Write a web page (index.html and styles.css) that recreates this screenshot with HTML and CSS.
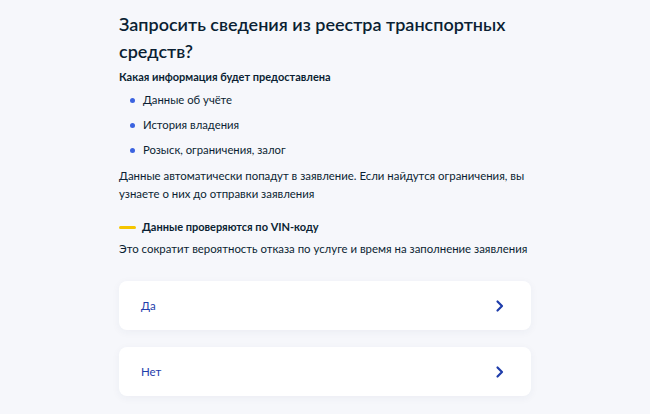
FILE: index.html
```html
<!DOCTYPE html>
<html lang="ru">
<head>
<meta charset="utf-8">
<link rel="stylesheet" href="styles.css">
</head>
<body>
<main class="page">
  <h1 class="title">Запросить сведения из реестра транспортных средств?</h1>
  <h2 class="subtitle">Какая информация будет предоставлена</h2>
  <ul class="list">
    <li>Данные об учёте</li>
    <li>История владения</li>
    <li>Розыск, ограничения, залог</li>
  </ul>
  <p class="text">Данные автоматически попадут в заявление. Если найдутся ограничения, вы узнаете о них до отправки заявления</p>
  <div class="note"><span class="note-line"></span><span class="note-title">Данные проверяются по VIN-коду</span></div>
  <p class="text note-text">Это сократит вероятность отказа по услуге и время на заполнение заявления</p>
  <div class="options">
    <a class="option" href="#"><span>Да</span>
      <svg class="chev" width="10" height="14" viewBox="0 0 10 14"><path d="M2.5 2.5 7 7l-4.5 4.5" fill="none" stroke="#1f3dab" stroke-width="2.2" stroke-linecap="round" stroke-linejoin="round"/></svg>
    </a>
    <a class="option" href="#"><span>Нет</span>
      <svg class="chev" width="10" height="14" viewBox="0 0 10 14"><path d="M2.5 2.5 7 7l-4.5 4.5" fill="none" stroke="#1f3dab" stroke-width="2.2" stroke-linecap="round" stroke-linejoin="round"/></svg>
    </a>
  </div>
</main>
</body>
</html>
```
FILE: styles.css
```css
* { box-sizing: border-box; }
html, body { margin: 0; padding: 0; }
body {
  background: #f6f7fb;
  font-family: Lato, "Noto Sans", sans-serif;
  color: #0b1f33;
  width: 650px;
  height: 414px;
  overflow: hidden;
}
.page {
  width: 412px;
  margin-left: 119px;
  padding-top: 11px;
}
.title {
  margin: 0;
  font-size: 18px;
  font-weight: 600;
  line-height: 27px;
  width: 400px;
}
.subtitle {
  margin: 4px 0 0;
  font-size: 11px;
  font-weight: 700;
  line-height: 16px;
}
.list {
  list-style: none;
  margin: 7px 0 0;
  padding: 0;
}
.list li {
  position: relative;
  padding-left: 24px;
  font-size: 11.3px;
  line-height: 16px;
}
.list li + li { margin-top: 9px; }
.list li::before {
  content: "";
  position: absolute;
  left: 11px;
  top: 6px;
  width: 5px;
  height: 5px;
  border-radius: 50%;
  background: #3b63e0;
}
.text {
  margin: 9px 0 0;
  font-size: 11.4px;
  line-height: 18px;
}
.note {
  display: flex;
  align-items: center;
  gap: 6px;
  margin-top: 16px;
}
.note-line {
  width: 17px;
  height: 3px;
  border-radius: 2px;
  background: #f5c500;
}
.note-title {
  font-size: 11px;
  font-weight: 700;
  line-height: 16px;
}
.note-text { margin-top: 5px; }
.options {
  display: flex;
  flex-direction: column;
  gap: 17px;
  margin-top: 23px;
}
.option {
  display: flex;
  align-items: center;
  justify-content: space-between;
  height: 49px;
  padding: 0 26px 0 22px;
  background: #fff;
  border-radius: 8px;
  box-shadow: 0 2px 8px rgba(30, 50, 90, 0.05);
  text-decoration: none;
  color: #1f3dab;
  font-size: 11.5px;
  font-weight: 400;
}
.chev { display: block; }
```
